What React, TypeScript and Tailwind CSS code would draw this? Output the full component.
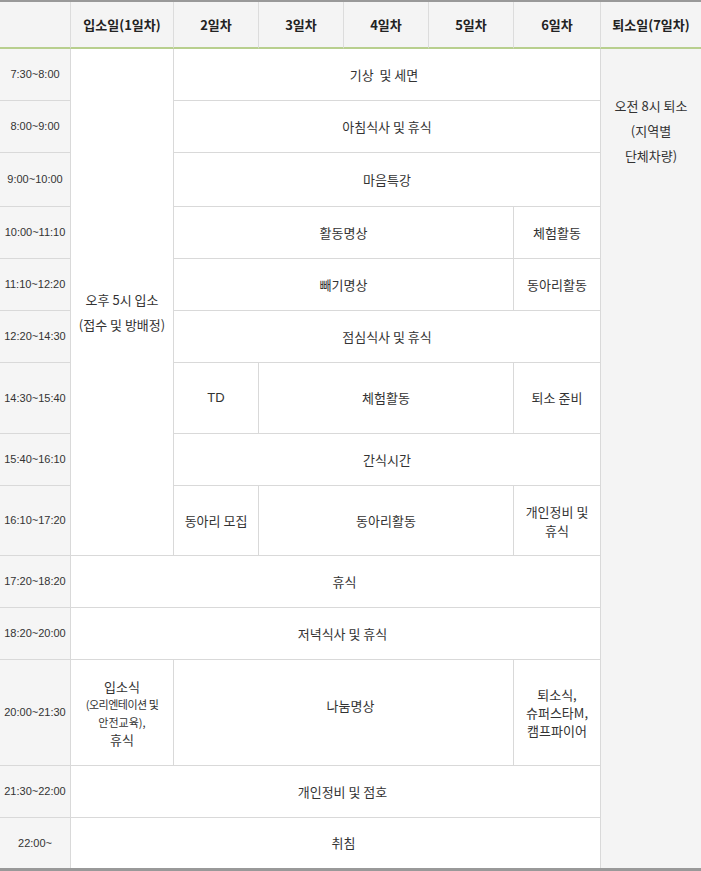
import type { ReactNode } from "react";

const cell =
  "flex items-center justify-center text-center border-r border-b border-[#d9d9d9] bg-white text-[13px] text-[#333]";
const timeCell =
  "flex items-center justify-center border-r border-b border-[#d9d9d9] bg-[#f5f5f5] font-['Liberation_Sans',sans-serif] text-[11px] text-[#333] col-start-1";
const headCell =
  "flex items-center justify-center border-r border-r-[#dcdcdc] border-b-2 border-b-[#b8cf8e] bg-[#f4f4f4] font-bold text-[13px] text-[#222] row-start-1";

const Cell = ({ className, children }: { className: string; children?: ReactNode }) => (
  <div className={`${cell} ${className}`}>{children}</div>
);

const times = [
  "7:30~8:00",
  "8:00~9:00",
  "9:00~10:00",
  "10:00~11:10",
  "11:10~12:20",
  "12:20~14:30",
  "14:30~15:40",
  "15:40~16:10",
  "16:10~17:20",
  "17:20~18:20",
  "18:20~20:00",
  "20:00~21:30",
  "21:30~22:00",
  "22:00~",
];

// row-start classes written out so Tailwind picks them up
const timeRows = [
  "row-start-2",
  "row-start-3",
  "row-start-4",
  "row-start-5",
  "row-start-6",
  "row-start-7",
  "row-start-8",
  "row-start-9",
  "row-start-10",
  "row-start-11",
  "row-start-12",
  "row-start-13",
  "row-start-14",
  "row-start-15 border-b-0",
];

const heads = ["", "입소일(1일차)", "2일차", "3일차", "4일차", "5일차", "6일차", "퇴소일(7일차)"];
const headCols = [
  "col-start-1",
  "col-start-2",
  "col-start-3",
  "col-start-4",
  "col-start-5",
  "col-start-6",
  "col-start-7",
  "col-start-8 border-r-0",
];

export default function App() {
  return (
    <div className="w-[701px] bg-white font-['Noto_Sans_CJK_KR',sans-serif]">
      <div className="grid grid-cols-[71px_103px_85px_85px_85px_85px_87px_100px] grid-rows-[47px_52px_52px_54px_52px_52px_52px_71px_52px_70px_52px_52px_106px_52px_50px] border-t-2 border-b-[3px] border-[#999]">
        {heads.map((h, i) => (
          <div key={i} className={`${headCell} ${headCols[i]}`}>
            {h}
          </div>
        ))}

        {times.map((t, i) => (
          <div key={t} className={`${timeCell} ${timeRows[i]}`}>
            {t}
          </div>
        ))}

        <Cell className="col-start-2 row-start-2 row-span-9 pt-[20px] leading-[25px]">
          오후 5시 입소
          <br />
          (접수 및 방배정)
        </Cell>

        <div className="col-start-8 row-start-2 row-span-14 flex justify-center bg-[#f4f4f4] pt-[44px] text-center text-[13px] leading-[25px] text-[#333]">
          <div>
            오전 8시 퇴소
            <br />
            (지역별
            <br />
            단체차량)
          </div>
        </div>

        <Cell className="col-start-3 col-span-5 row-start-2 pr-[6px]">기상&nbsp; 및 세면</Cell>
        <Cell className="col-start-3 col-span-5 row-start-3">아침식사 및 휴식</Cell>
        <Cell className="col-start-3 col-span-5 row-start-4">마음특강</Cell>

        <Cell className="col-start-3 col-span-4 row-start-5">활동명상</Cell>
        <Cell className="col-start-7 row-start-5">체험활동</Cell>

        <Cell className="col-start-3 col-span-4 row-start-6">빼기명상</Cell>
        <Cell className="col-start-7 row-start-6">동아리활동</Cell>

        <Cell className="col-start-3 col-span-5 row-start-7">점심식사 및 휴식</Cell>

        <Cell className="col-start-3 row-start-8 font-['Liberation_Sans',sans-serif]">TD</Cell>
        <Cell className="col-start-4 col-span-3 row-start-8">체험활동</Cell>
        <Cell className="col-start-7 row-start-8">퇴소 준비</Cell>

        <Cell className="col-start-3 col-span-5 row-start-9">간식시간</Cell>

        <Cell className="col-start-3 row-start-10">동아리 모집</Cell>
        <Cell className="col-start-4 col-span-3 row-start-10">동아리활동</Cell>
        <Cell className="col-start-7 row-start-10 leading-[19px]">
          개인정비 및
          <br />
          휴식
        </Cell>

        <Cell className="col-start-2 col-span-6 row-start-11 pl-[18px]">휴식</Cell>
        <Cell className="col-start-2 col-span-6 row-start-12 pl-[14px]">저녁식사 및 휴식</Cell>

        <Cell className="col-start-2 row-start-13 leading-[17px]">
          <div>
            입소식
            <br />
            <span className="whitespace-nowrap text-[11px] tracking-[-0.5px]">(오리엔테이션 및</span>
            <br />
            <span className="text-[11px]">안전교육),</span>
            <br />
            휴식
          </div>
        </Cell>
        <Cell className="col-start-3 col-span-4 row-start-13 pl-[14px] pb-[14px]">나눔명상</Cell>
        <Cell className="col-start-7 row-start-13 leading-[18px]">
          퇴소식,
          <br />
          슈퍼스타M,
          <br />
          캠프파이어
        </Cell>

        <Cell className="col-start-2 col-span-6 row-start-14 pl-[14px]">개인정비 및 점호</Cell>
        <Cell className="col-start-2 col-span-6 row-start-15 border-b-0 pl-[16px]">취침</Cell>
      </div>
    </div>
  );
}
